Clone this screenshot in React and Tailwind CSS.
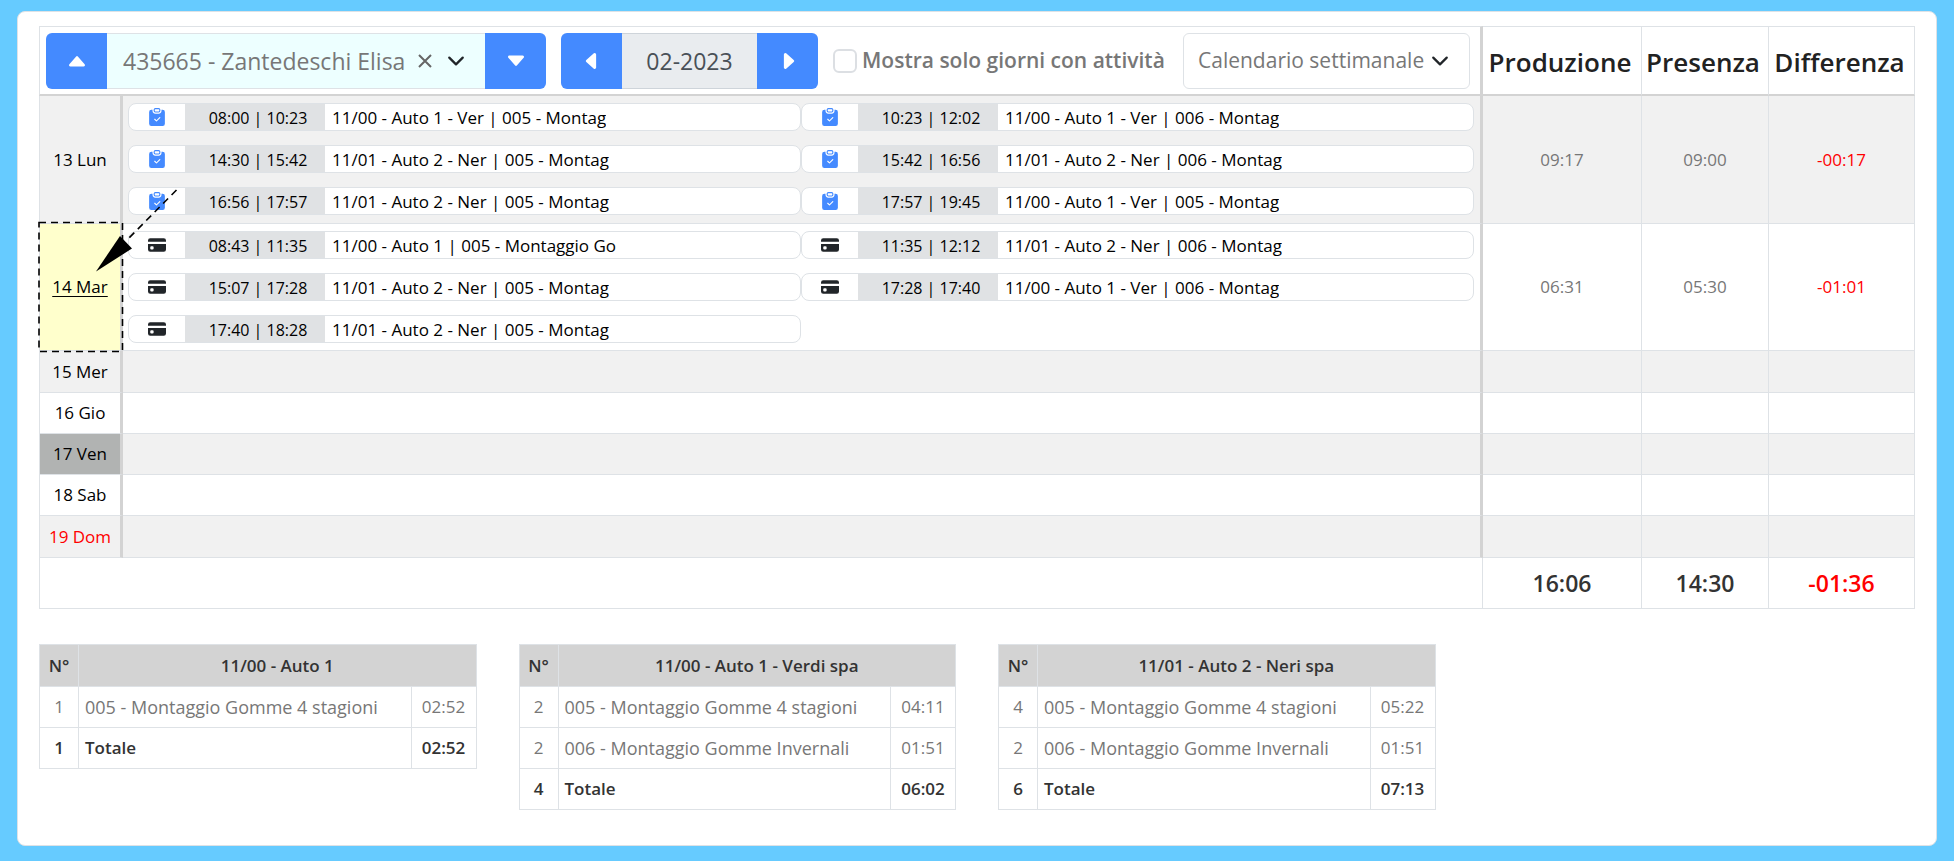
import { useState } from 'react';
import {
  BsCaretDownFill,
  BsCaretLeftFill,
  BsCaretRightFill,
  BsCaretUpFill,
  BsClipboardCheckFill,
  BsCreditCardFill,
} from 'react-icons/bs';

const DAYS = [
  {
    label: '13 Lun',
    height: 'h-32',
    source: 'task',
    produzione: '09:17',
    presenza: '09:00',
    differenza: '-00:17',
    activities: [
      { time: '08:00 | 10:23', text: '11/00 - Auto 1 - Ver | 005 - Montag' },
      { time: '10:23 | 12:02', text: '11/00 - Auto 1 - Ver | 006 - Montag' },
      { time: '14:30 | 15:42', text: '11/01 - Auto 2 - Ner | 005 - Montag' },
      { time: '15:42 | 16:56', text: '11/01 - Auto 2 - Ner | 006 - Montag' },
      { time: '16:56 | 17:57', text: '11/01 - Auto 2 - Ner | 005 - Montag' },
      { time: '17:57 | 19:45', text: '11/00 - Auto 1 - Ver | 005 - Montag' },
    ],
  },
  {
    label: '14 Mar',
    height: 'h-[127px]',
    source: 'badge',
    highlighted: true,
    produzione: '06:31',
    presenza: '05:30',
    differenza: '-01:01',
    activities: [
      { time: '08:43 | 11:35', text: '11/00 - Auto 1 | 005 - Montaggio Go' },
      { time: '11:35 | 12:12', text: '11/01 - Auto 2 - Ner | 006 - Montag' },
      { time: '15:07 | 17:28', text: '11/01 - Auto 2 - Ner | 005 - Montag' },
      { time: '17:28 | 17:40', text: '11/00 - Auto 1 - Ver | 006 - Montag' },
      { time: '17:40 | 18:28', text: '11/01 - Auto 2 - Ner | 005 - Montag' },
    ],
  },
  { label: '15 Mer', height: 'h-[42px]' },
  { label: '16 Gio', height: 'h-[41px]' },
  { label: '17 Ven', height: 'h-[41px]', today: true },
  { label: '18 Sab', height: 'h-[41px]' },
  { label: '19 Dom', height: 'h-[42px]', holiday: true },
];

const SUMMARIES = [
  {
    title: '11/00 - Auto 1',
    rows: [{ count: 1, name: '005 - Montaggio Gomme 4 stagioni', hours: '02:52' }],
    count: 1,
    total: '02:52',
  },
  {
    title: '11/00 - Auto 1 - Verdi spa',
    rows: [
      { count: 2, name: '005 - Montaggio Gomme 4 stagioni', hours: '04:11' },
      { count: 2, name: '006 - Montaggio Gomme Invernali', hours: '01:51' },
    ],
    count: 4,
    total: '06:02',
  },
  {
    title: '11/01 - Auto 2 - Neri spa',
    rows: [
      { count: 4, name: '005 - Montaggio Gomme 4 stagioni', hours: '05:22' },
      { count: 2, name: '006 - Montaggio Gomme Invernali', hours: '01:51' },
    ],
    count: 6,
    total: '07:13',
  },
];

const Chevron = ({ className }) => (
  <svg viewBox="0 0 16 16" className={className} fill="none" stroke="#212529" strokeWidth="2" strokeLinecap="round" strokeLinejoin="round" aria-hidden="true">
    <path d="M2 5l6 6 6-6" />
  </svg>
);

const NavButton = ({ label, className, children }) => (
  <button type="button" aria-label={label} className={`flex w-[61px] shrink-0 items-center justify-center bg-[#448aff] text-[22px] text-white ${className}`}>
    {children}
  </button>
);

const Activity = ({ source, time, text }) => (
  <div className="flex h-7 overflow-hidden rounded-lg border border-[#dee2e6] bg-white leading-7 text-black">
    <div className="flex w-14 shrink-0 items-center justify-center text-lg">
      {source === 'task' ? <BsClipboardCheckFill className="text-[#448aff]" /> : <BsCreditCardFill className="text-[#212529]" />}
    </div>
    <div className="w-[140px] shrink-0 bg-[#e0e2e4] pl-1.5 text-center text-base leading-7">{time}</div>
    <div className="min-w-0 truncate pl-[7px]">{text}</div>
  </div>
);

// dashed frame and arrow pointing at the day that has to be checked
const DayMarker = () => (
  <svg width="150" height="170" viewBox="0 0 150 170" className="pointer-events-none absolute -top-[36px] -left-[3px] z-10" fill="none" stroke="#000" strokeWidth="1.6" strokeDasharray="7 5" aria-hidden="true">
    <rect x="2" y="34.5" width="83.5" height="129" />
    <path d="M139.5 2L90 52" />
    <path d="M59 83.500L83 48l12 12.500z" fill="#000" stroke="none" />
  </svg>
);

const DayRow = ({ day, striped }) => {
  const cell = `border-b border-[#dee2e6] ${striped ? 'bg-[#f1f1f1]' : 'bg-white'}`;
  let dayColor = striped ? 'bg-[#f1f1f1] text-black' : 'bg-white text-black';
  if (day.highlighted) dayColor = 'bg-[#ffffcc] text-black underline decoration-1 underline-offset-3';
  if (day.today) dayColor = 'bg-[#b1b3b2] text-black';
  if (day.holiday) dayColor = 'bg-[#f1f1f1] text-[#f00]';

  return (
    <tr className={day.height}>
      <th scope="row" className={`relative border-r-3 border-b border-l border-r-[#d3d3d3] border-b-[#dee2e6] border-l-[#dee2e6] p-0 font-normal ${dayColor}`}>
        {day.label}
        {day.highlighted && <DayMarker />}
      </th>
      <td className={`${cell} border-r-3 border-r-[#d3d3d3] p-0 align-top`}>
        {day.activities && (
          <div className="grid grid-cols-2 gap-y-3.5 py-[7px] pr-1.5 pl-[5px]">
            {day.activities.map((activity) => (
              <Activity key={activity.time} source={day.source} {...activity} />
            ))}
          </div>
        )}
      </td>
      <td className={`${cell} border-r p-0`}>{day.produzione}</td>
      <td className={`${cell} border-r p-0`}>{day.presenza}</td>
      <td className={`${cell} border-r p-0 text-[#f00]`}>{day.differenza}</td>
    </tr>
  );
};

const Toolbar = () => {
  const [onlyActive, setOnlyActive] = useState(false);

  return (
    <div className="flex h-14 items-stretch text-left font-normal text-[#777]">
      <div className="flex w-[500px] shrink-0">
        <NavButton label="Dipendente precedente" className="rounded-l-md"><BsCaretUpFill /></NavButton>
        <div className="flex min-w-0 flex-1 items-center border-y border-[#dee2e6] bg-[#edffff] pr-5 pl-4">
          <input type="text" aria-label="Dipendente" defaultValue="435665 - Zantedeschi Elisa" className="min-w-0 flex-1 bg-transparent pt-0.5 text-[23px] outline-none" />
          <button type="button" aria-label="Rimuovi dipendente" className="mr-3.5">
            <svg viewBox="0 0 16 16" className="size-4" fill="none" stroke="#666" strokeWidth="2" aria-hidden="true">
              <path d="M2 2l12 12M14 2L2 14" />
            </svg>
          </button>
          <button type="button" aria-label="Apri elenco"><Chevron className="size-[18px]" /></button>
        </div>
        <NavButton label="Dipendente successivo" className="rounded-r-md"><BsCaretDownFill /></NavButton>
      </div>

      <div className="ml-[15px] flex w-[257px] shrink-0">
        <NavButton label="Mese precedente" className="rounded-l-md"><BsCaretLeftFill /></NavButton>
        <div className="flex flex-1 items-center justify-center border-y border-[#ced4da] bg-[#e9ecef] pt-0.5 text-[23px] text-[#495057]">02-2023</div>
        <NavButton label="Mese successivo" className="rounded-r-md"><BsCaretRightFill /></NavButton>
      </div>

      <label className="ml-[15px] flex shrink-0 items-center gap-[5px] text-[21px] font-semibold">
        <input type="checkbox" checked={onlyActive} onChange={(e) => setOnlyActive(e.target.checked)} className="size-6 appearance-none rounded-md border-2 border-[#dcdfe3] bg-white checked:bg-[#448aff]" />
        Mostra solo giorni con attività
      </label>

      <div className="relative ml-auto w-[287px] shrink-0">
        <select aria-label="Tipo di calendario" className="size-full appearance-none rounded-md border border-[#dee2e6] bg-white pl-3.5 text-[21px] outline-none">
          <option>Calendario settimanale</option>
        </select>
        <Chevron className="pointer-events-none absolute top-[19px] right-[21px] size-[18px]" />
      </div>
    </div>
  );
};

const SummaryTable = ({ summary }) => (
  <table className="w-full table-fixed border-collapse self-start text-center text-[17px] text-[#777]">
    <colgroup>
      <col className="w-[39px]" />
      <col />
      <col className="w-[65px]" />
    </colgroup>
    <thead>
      <tr className="h-[42px] bg-[#d3d3d3] text-[#333]">
        <th className="border border-[#dee2e6] p-0 font-semibold">N°</th>
        <th colSpan={2} className="border border-[#dee2e6] p-0 font-semibold">{summary.title}</th>
      </tr>
    </thead>
    <tbody>
      {summary.rows.map((row) => (
        <tr key={row.name} className="h-[41px]">
          <td className="border border-[#dee2e6] p-0">{row.count}</td>
          <td className="border border-[#dee2e6] py-0 pr-0 pl-1.5 text-left text-lg">{row.name}</td>
          <td className="border border-[#dee2e6] p-0">{row.hours}</td>
        </tr>
      ))}
      <tr className="h-[41px] font-semibold text-[#333]">
        <td className="border border-[#dee2e6] p-0">{summary.count}</td>
        <td className="border border-[#dee2e6] py-0 pr-0 pl-1.5 text-left">Totale</td>
        <td className="border border-[#dee2e6] p-0">{summary.total}</td>
      </tr>
    </tbody>
  </table>
);

export default function App() {
  return (
    <div className="min-h-screen bg-[#66cbff] px-[17px] pt-[11px] pb-[15px] font-['Open_Sans','Noto_Sans',sans-serif]">
      <main className="min-h-[835px] rounded-lg border border-[#dee2e6] bg-white px-[21px] pt-3.5">
        <table className="w-full table-fixed border-separate border-spacing-0 text-center text-[17px] text-[#777]">
          <colgroup>
            <col className="w-[84px]" />
            <col />
            <col className="w-[159px]" />
            <col className="w-[127px]" />
            <col className="w-[146px]" />
          </colgroup>
          <thead>
            <tr className="h-[70px] text-[26px] text-[#222]">
              <th colSpan={2} className="border-t border-r-3 border-b-2 border-l border-t-[#dee2e6] border-r-[#d3d3d3] border-b-[#d3d3d3] border-l-[#dee2e6] py-0 pr-2.5 pl-1.5">
                <Toolbar />
              </th>
              <th className="border-t border-r border-b-2 border-[#dee2e6] border-b-[#d3d3d3] pt-1 pr-1 pb-0 pl-0 font-semibold">Produzione</th>
              <th className="border-t border-r border-b-2 border-[#dee2e6] border-b-[#d3d3d3] pt-1 pr-1 pb-0 pl-0 font-semibold">Presenza</th>
              <th className="border-t border-r border-b-2 border-[#dee2e6] border-b-[#d3d3d3] pt-1 pr-1 pb-0 pl-0 font-semibold">Differenza</th>
            </tr>
          </thead>
          <tbody>
            {DAYS.map((day, i) => (
              <DayRow key={day.label} day={day} striped={i % 2 === 0} />
            ))}
          </tbody>
          <tfoot>
            <tr className="h-[51px] text-[23px] font-semibold text-[#333]">
              <td colSpan={2} className="border-r border-b border-l border-[#dee2e6] p-0" />
              <td className="border-r border-b border-[#dee2e6] p-0">16:06</td>
              <td className="border-r border-b border-[#dee2e6] p-0">14:30</td>
              <td className="border-r border-b border-[#dee2e6] p-0 text-[#f00]">-01:36</td>
            </tr>
          </tfoot>
        </table>

        <section className="mt-[35px] grid grid-cols-4 gap-[42px] pb-8">
          {SUMMARIES.map((summary) => (
            <SummaryTable key={summary.title} summary={summary} />
          ))}
        </section>
      </main>
    </div>
  );
}
